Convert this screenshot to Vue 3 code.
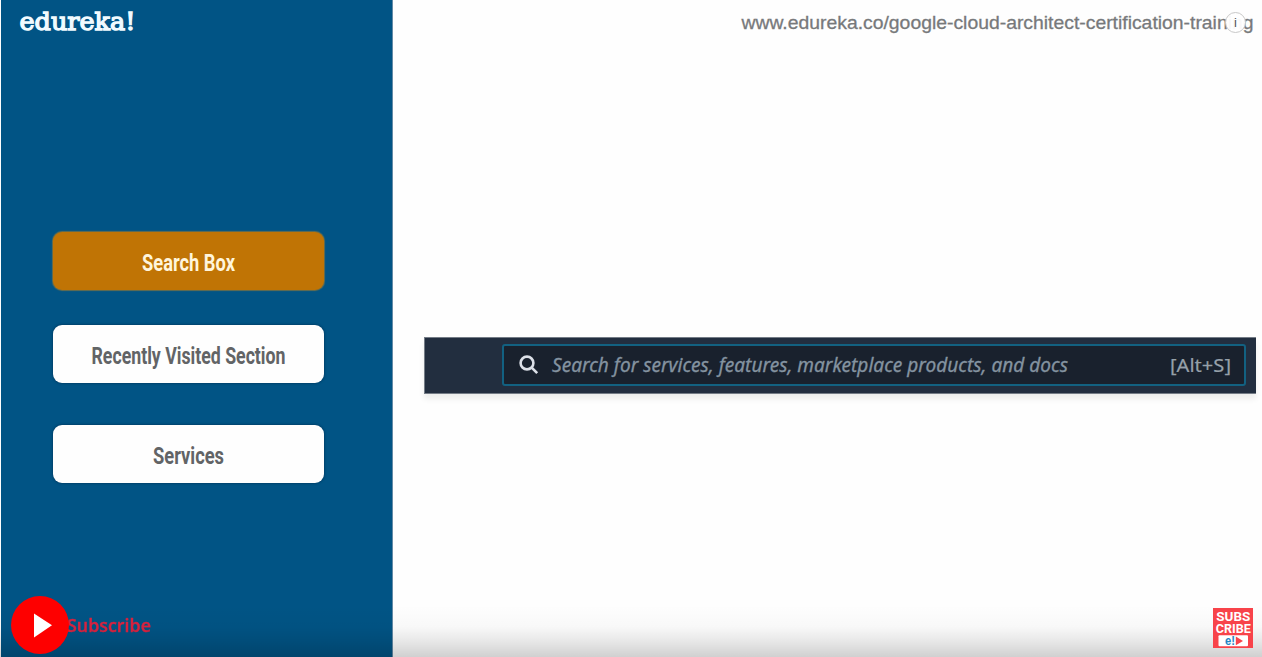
<script setup>
const topics = [
  { label: 'Search Box', active: true, width: 93 },
  { label: 'Recently Visited Section', active: false, width: 194 },
  { label: 'Services', active: false, width: 71 },
]
</script>

<template>
  <div class="slide">
    <aside class="panel">
      <svg class="brand" viewBox="0 0 130 34">
        <text x="0.5" y="23.5" textLength="116" lengthAdjust="spacingAndGlyphs">edureka!</text>
      </svg>
      <nav class="topics">
        <button v-for="topic in topics" :key="topic.label" class="topic" :class="{ active: topic.active }">
          <svg viewBox="0 0 271 58">
            <text x="135.5" y="38.5" text-anchor="middle" :textLength="topic.width" lengthAdjust="spacingAndGlyphs">{{ topic.label }}</text>
          </svg>
        </button>
      </nav>
      <div class="subscribe">
        <span class="play">
          <svg viewBox="0 0 58 58"><path d="M23 17.5 L41 29.3 L23 41.5 Z" /></svg>
        </span>
        <svg class="subscribe-label" viewBox="0 0 90 30">
          <text x="0" y="21.5" textLength="84" lengthAdjust="spacingAndGlyphs">Subscribe</text>
        </svg>
      </div>
    </aside>

    <main class="stage">
      <header class="address">
        <svg viewBox="0 0 520 34">
          <text x="0.5" y="22.7" textLength="512" lengthAdjust="spacingAndGlyphs">www.edureka.co/google-cloud-architect-certification-training</text>
        </svg>
        <span class="info">i</span>
      </header>

      <section class="bar">
        <div class="field">
          <svg class="glass" viewBox="0 0 22 22">
            <circle cx="9" cy="9" r="6.4" />
            <path d="M13.7 13.7 L19.2 19.2" />
          </svg>
          <svg class="hint" viewBox="0 0 530 38">
            <text x="0" y="25.8" textLength="516" lengthAdjust="spacingAndGlyphs">Search for services, features, marketplace products, and docs</text>
          </svg>
          <svg class="shortcut" viewBox="0 0 62 38">
            <text x="0" y="25.5" textLength="61" lengthAdjust="spacingAndGlyphs">[Alt+S]</text>
          </svg>
        </div>
      </section>
    </main>

    <div class="shade"></div>

    <svg class="badge" viewBox="0 0 40 40">
      <rect width="40" height="40" fill="#f8434a" />
      <text class="badge-word" x="3.3" y="13.4" textLength="34" lengthAdjust="spacingAndGlyphs">SUBS</text>
      <text class="badge-word" x="2.8" y="25" textLength="35" lengthAdjust="spacingAndGlyphs">CRIBE</text>
      <rect x="5.5" y="27.3" width="29.5" height="11" rx="1" fill="#fff" />
      <text class="badge-mark" x="12" y="37" textLength="10" lengthAdjust="spacingAndGlyphs">e!</text>
      <path d="M22.8 28.5 L30 33 L22.8 37.3 Z" fill="#f8434a" />
    </svg>
  </div>
</template>

<style>
body {
  margin: 0;
  background: #fff;
  overflow: hidden;
}
</style>

<style scoped>
.slide {
  position: relative;
  display: flex;
  box-sizing: border-box;
  width: 1262px;
  height: 657px;
  padding-left: 1px;
  background: #fefefe;
  overflow: hidden;
}

svg {
  display: block;
  overflow: visible;
}

.panel {
  display: flex;
  flex-direction: column;
  box-sizing: border-box;
  width: 392px;
  height: 657px;
  background: #015485;
  border-right: 1px solid #648ba7;
}

.brand {
  width: 130px;
  height: 34px;
  margin: 6px 0 0 18px;
}

.brand text {
  fill: #f1fbff;
  stroke: #f1fbff;
  stroke-width: 1.3px;
  font: 400 24.5px "DejaVu Serif", serif;
}

.topics {
  display: flex;
  flex-direction: column;
  margin: 192px 0 0 52px;
}

.topic {
  width: 271px;
  height: 58px;
  padding: 0;
  border: 0;
  border-radius: 9px;
  background: #fefefe;
  box-shadow: 0 0 2px 1px rgba(0, 44, 78, 0.45);
}

.topic:nth-child(2) {
  margin-top: 34.5px;
}

.topic:nth-child(3) {
  margin-top: 42px;
}

.topic svg {
  width: 271px;
  height: 58px;
}

.topic text {
  fill: #626466;
  font: 700 24px "Roboto", "Liberation Sans", sans-serif;
}

.topic.active {
  background: #c07405;
  box-shadow: 0 0 1px 1px rgba(130, 116, 65, 0.8);
}

.topic.active text {
  fill: #fff5dc;
}

.subscribe {
  display: flex;
  align-items: center;
  height: 58px;
  margin: 113.5px 0 0 10px;
}

.play {
  position: relative;
  z-index: 2;
  width: 58px;
  height: 58px;
  border-radius: 50%;
  background: #fe0000;
}

.play path {
  fill: #fff;
}

.subscribe-label {
  width: 90px;
  height: 30px;
  margin-left: -2px;
  filter: blur(0.6px);
}

.subscribe-label text {
  fill: #dc2340;
  stroke: #dc2340;
  stroke-width: 0.4px;
  font: 600 18.5px "Open Sans", sans-serif;
}

.stage {
  display: flex;
  flex-direction: column;
  flex: 1;
}

.address {
  position: relative;
  height: 34px;
  margin: 6px 0 0 348px;
}

.address svg {
  width: 520px;
  height: 34px;
}

.address text {
  fill: #77797b;
  stroke: #77797b;
  stroke-width: 0.3px;
  font: 19px "Liberation Sans", Arial, sans-serif;
}

.info {
  position: absolute;
  left: 484px;
  top: 6px;
  box-sizing: border-box;
  width: 21px;
  height: 21px;
  border: 1px solid #c8c8c8;
  border-radius: 50%;
  background: rgba(255, 255, 255, 0.95);
  color: #555;
  font: 13px/20px "Liberation Sans", sans-serif;
  text-align: center;
}

.bar {
  display: flex;
  box-sizing: border-box;
  width: 832px;
  height: 57px;
  margin: 297px 0 0 31px;
  padding: 6px 10px 7px 77px;
  background: #222e3f;
  border: 1px solid #747c86;
  border-width: 1px 0 1px 1px;
  box-shadow: 0 5px 5px rgba(90, 100, 90, 0.1);
}

.field {
  display: flex;
  align-items: center;
  box-sizing: border-box;
  width: 744px;
  height: 42px;
  padding: 0 12px 0 14px;
  border: 2px solid #126181;
  border-radius: 3px;
  background: #19212d;
}

.glass {
  width: 22px;
  height: 22px;
  flex: none;
  fill: none;
  stroke: #dce0e8;
  stroke-width: 2.6;
}

.hint {
  width: 530px;
  height: 38px;
  flex: none;
  margin-left: 12px;
}

.hint text {
  fill: #8493a0;
  stroke: #8493a0;
  stroke-width: 0.3px;
  font: italic 19px "Noto Sans", "Open Sans", sans-serif;
}

.shortcut {
  width: 62px;
  height: 38px;
  flex: none;
  margin-left: auto;
}

.shortcut text {
  fill: #96a0a9;
  stroke: #96a0a9;
  stroke-width: 0.2px;
  font: 18.5px "Noto Sans", "Open Sans", sans-serif;
}

.shade {
  position: absolute;
  inset: auto 0 0 0;
  height: 52px;
  background: linear-gradient(to bottom, rgba(0, 0, 0, 0), rgba(0, 0, 0, 0.025) 42%, rgba(0, 0, 0, 0.09) 70%, rgba(0, 0, 0, 0.18));
  pointer-events: none;
}

.badge {
  position: absolute;
  left: 1213px;
  top: 608px;
  width: 40px;
  height: 40px;
}

.badge-word {
  fill: #fff;
  font: 700 13.5px "Roboto", sans-serif;
}

.badge-mark {
  fill: #2385c4;
  font: 700 12px "Liberation Sans", sans-serif;
}
</style>
